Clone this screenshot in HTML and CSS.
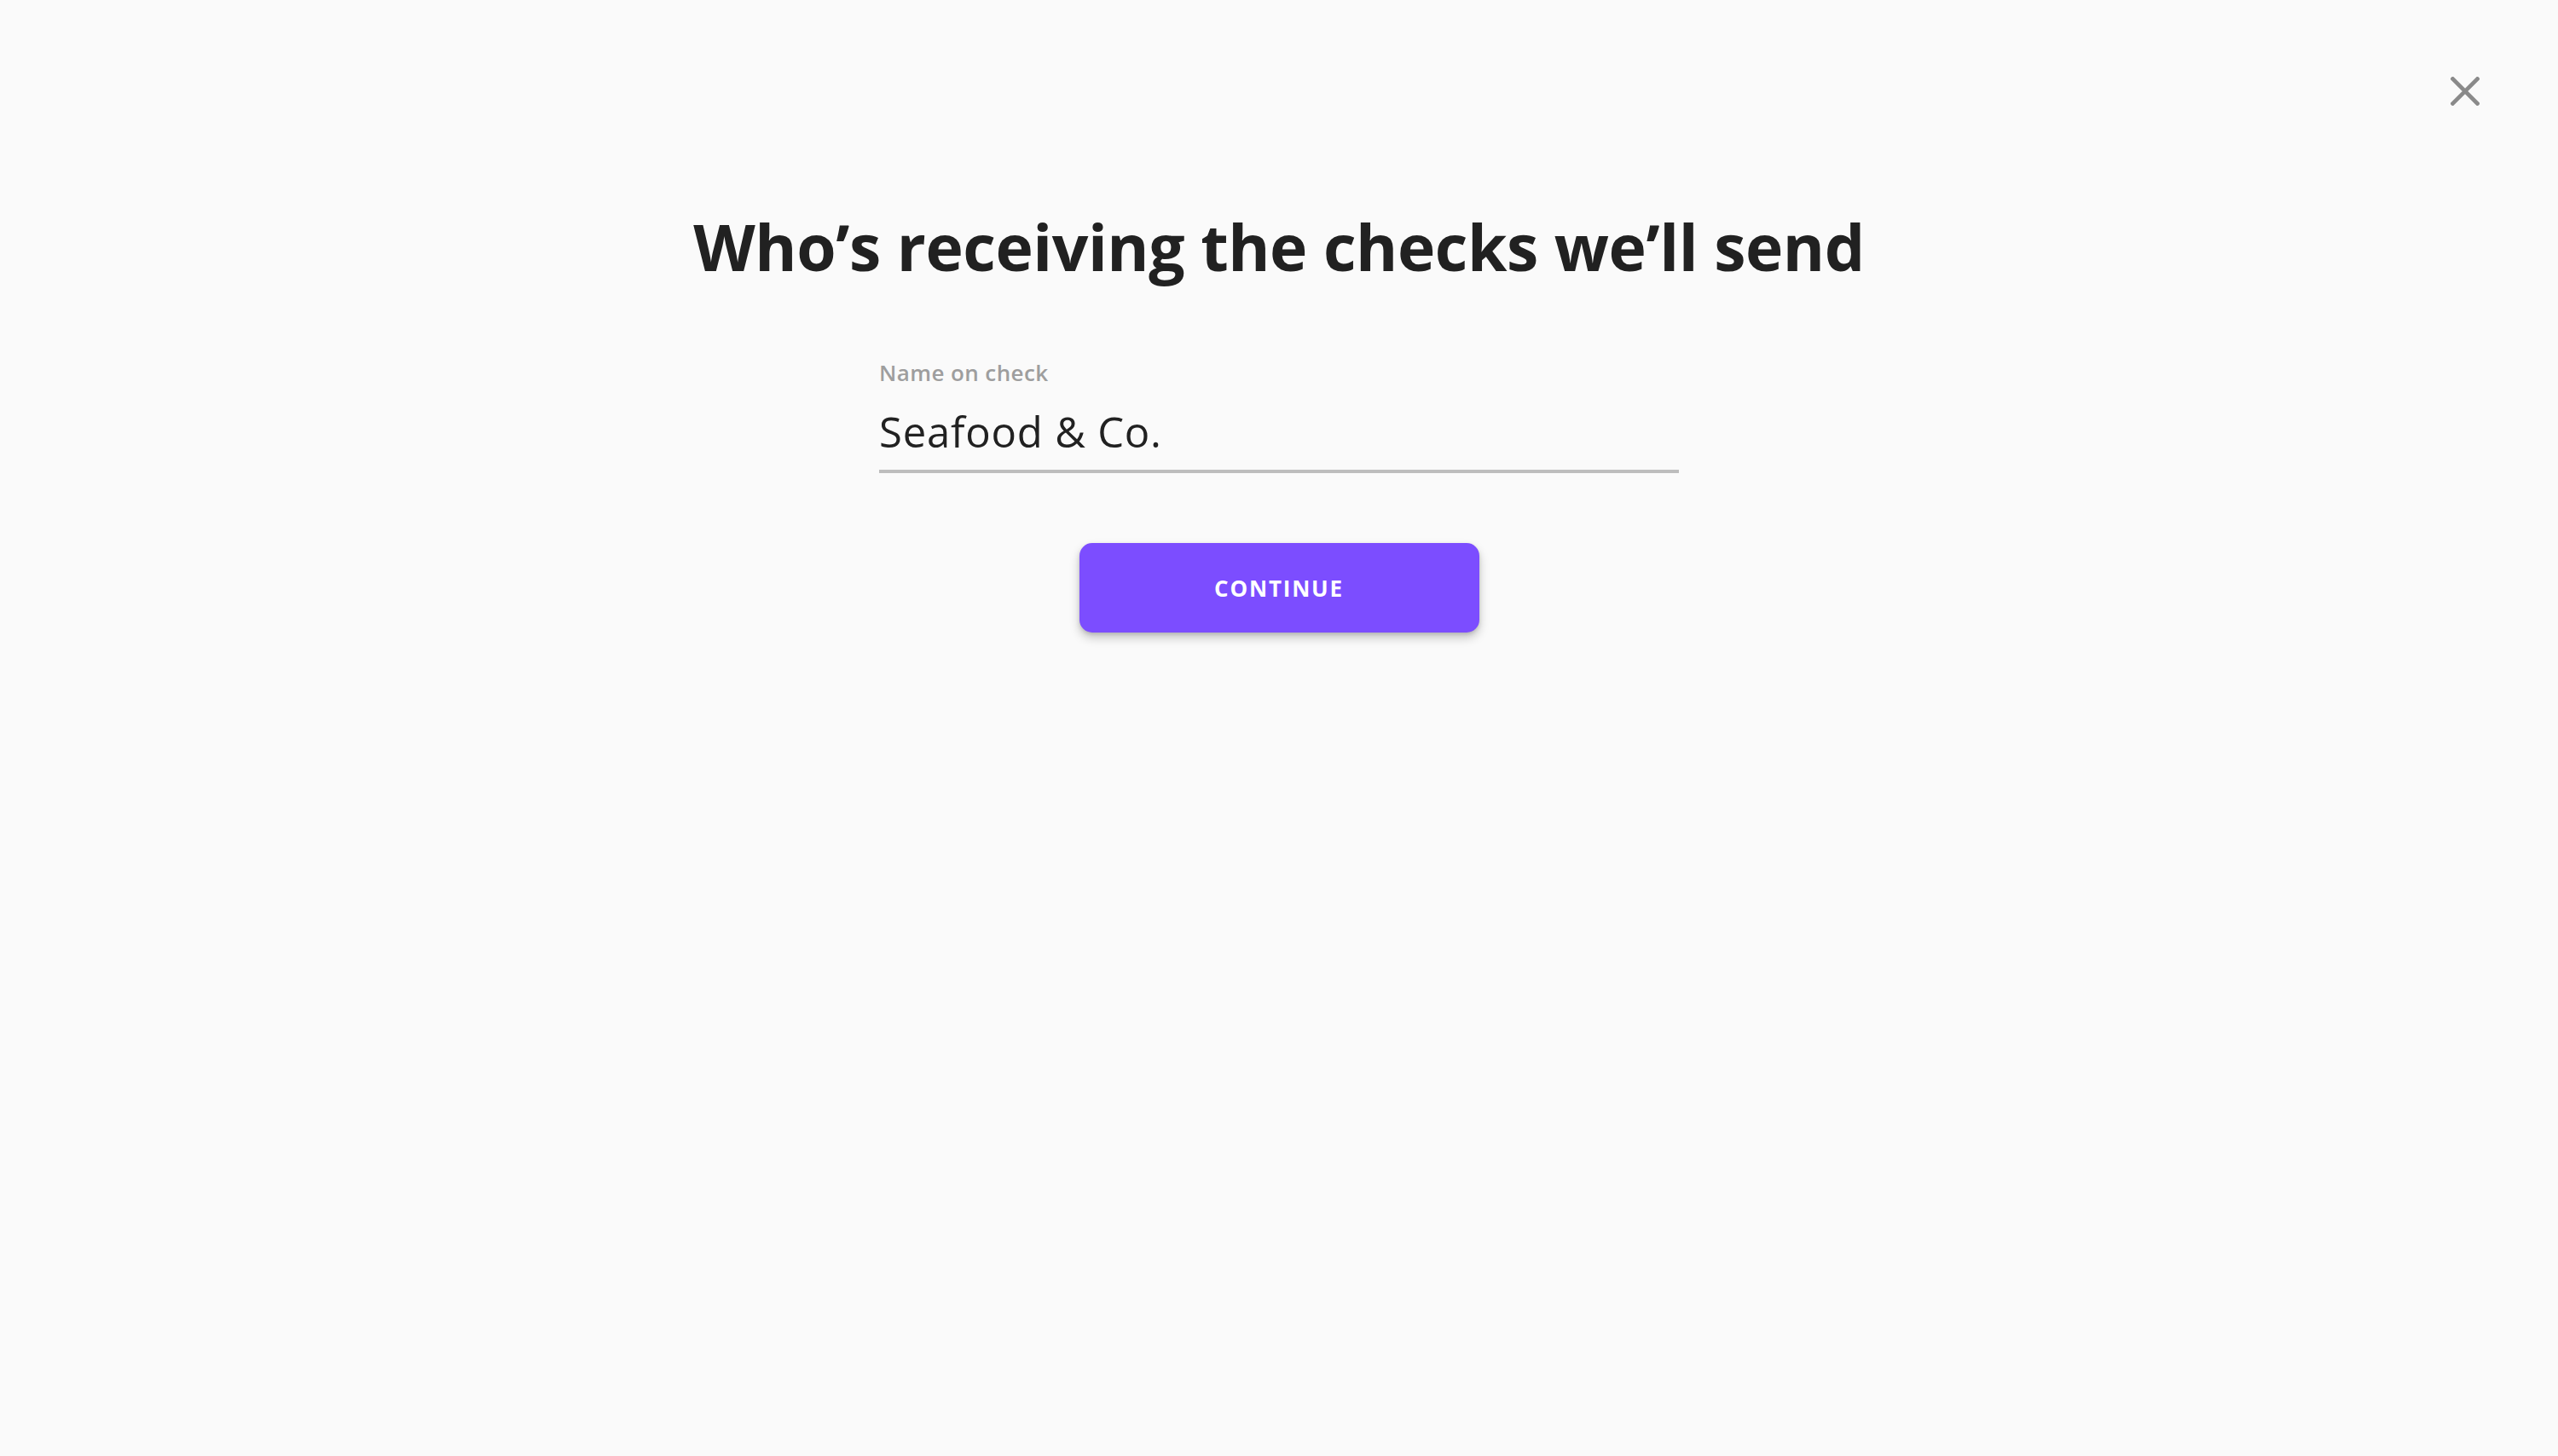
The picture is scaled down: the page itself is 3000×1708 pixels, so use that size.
FILE: index.html
```html
<!DOCTYPE html>
<html lang="en">
<head>
<meta charset="utf-8">
<title>Who’s receiving the checks we’ll send</title>
<link rel="stylesheet" href="styles.css">
</head>
<body>
<div class="page">
  <div class="topbar">
    <button class="close" aria-label="Close">
      <svg viewBox="0 0 34 34" width="34" height="34" aria-hidden="true">
        <path d="M2.5 2.5 L31.5 31.5 M31.5 2.5 L2.5 31.5" stroke="#8a8a8a" stroke-width="4.6" stroke-linecap="square" fill="none"/>
      </svg>
    </button>
  </div>
  <main class="content">
    <h1 class="title">Who’s receiving the checks we’ll send</h1>
    <div class="field">
      <label class="field-label" for="name">Name on check</label>
      <div class="field-input" id="name">Seafood &amp; Co.</div>
    </div>
    <button class="continue">CONTINUE</button>
  </main>
</div>
</body>
</html>
```

FILE: styles.css
```css
html, body {
  margin: 0;
  padding: 0;
  background: #fafafa;
}
body {
  font-family: "Open Sans", "Noto Sans", sans-serif;
  color: #212121;
}
.page {
  min-height: 1708px;
  display: flex;
  flex-direction: column;
}
.topbar {
  display: flex;
  justify-content: flex-end;
  padding: 90px 92px 0 0;
  height: 34px;
}
.close {
  background: none;
  border: 0;
  padding: 0;
  width: 34px;
  height: 34px;
  display: block;
  cursor: pointer;
}
.close svg { display: block; }
.content {
  display: flex;
  flex-direction: column;
  align-items: center;
}
.title {
  margin: 120px 0 0;
  font-family: "Open Sans", sans-serif;
  font-weight: 700;
  font-size: 75px;
  line-height: 90px;
  letter-spacing: -0.45px;
  color: #212121;
}
.field {
  width: 938px;
  margin-top: 88px;
  display: flex;
  flex-direction: column;
}
.field-label {
  font-family: "Open Sans", sans-serif;
  font-weight: 600;
  font-size: 26px;
  line-height: 30px;
  letter-spacing: 0.4px;
  color: #9e9e9e;
}
.field-input {
  margin-top: 24px;
  font-family: "Open Sans", sans-serif;
  font-weight: 400;
  font-size: 49px;
  line-height: 60px;
  letter-spacing: 0.8px;
  color: #212121;
  padding-bottom: 15px;
  border-bottom: 4px solid #bdbdbd;
}
.continue {
  margin-top: 82px;
  width: 469px;
  height: 105px;
  border: 0;
  border-radius: 15px;
  background: #7c4dff;
  color: #ffffff;
  font-family: "Open Sans", sans-serif;
  font-weight: 700;
  font-size: 26px;
  letter-spacing: 1.8px;
  box-shadow: 0 6px 12px rgba(0,0,0,0.22), 0 2px 4px rgba(0,0,0,0.12);
  cursor: pointer;
}
```
